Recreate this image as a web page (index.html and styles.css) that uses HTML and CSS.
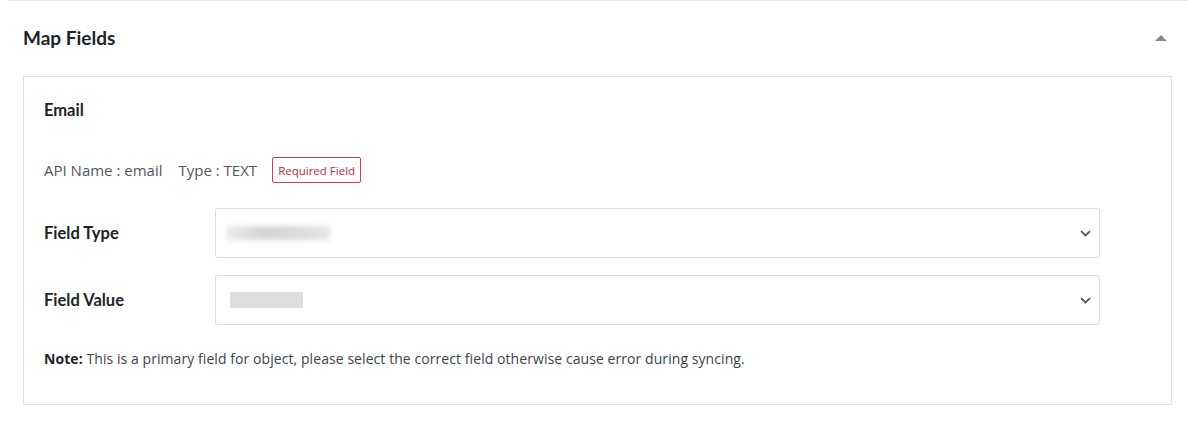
FILE: index.html
```html
<!DOCTYPE html>
<html lang="en">
<head>
<meta charset="utf-8">
<title>Map Fields</title>
<link rel="stylesheet" href="styles.css">
</head>
<body>
<section class="panel">
  <header class="panel-head">
    <h2 class="panel-title">Map Fields</h2>
    <span class="toggle" aria-hidden="true"></span>
  </header>
  <div class="field-box">
    <h3 class="field-name">Email</h3>
    <div class="meta">
      <span>API Name : email</span>
      <span class="type">Type : TEXT</span>
      <span class="badge">Required Field</span>
    </div>
    <div class="row row-type">
      <label class="row-label">Field Type</label>
      <div class="select">
        <span class="blur blur-a"></span>
        <svg class="chev" width="11" height="7" viewBox="0 0 11 7"><path d="M1 1.2l4.5 4.3 4.5-4.3" fill="none" stroke="#555" stroke-width="1.8"/></svg>
      </div>
    </div>
    <div class="row row-value">
      <label class="row-label">Field Value</label>
      <div class="select">
        <span class="blur blur-b"></span>
        <svg class="chev" width="11" height="7" viewBox="0 0 11 7"><path d="M1 1.2l4.5 4.3 4.5-4.3" fill="none" stroke="#555" stroke-width="1.8"/></svg>
      </div>
    </div>
    <p class="note"><strong>Note:</strong> This is a primary field for object, please select the correct field otherwise cause error during syncing.</p>
  </div>
</section>
</body>
</html>
```

FILE: styles.css
```css
html, body { background: #fff; }
body {
  margin: 0 8px;
  font-family: "Open Sans", "Noto Sans", sans-serif;
  color: #1d2327;
}
.panel {
  border-top: 1px solid #e6e6e6;
  padding: 0 15px 17px;
}
.panel-head {
  height: 75px;
  display: flex;
  align-items: center;
  justify-content: space-between;
}
.panel-title {
  margin: 0 0 2px;
  font-family: "Lato", "Open Sans", sans-serif;
  font-weight: 700;
  font-size: 19px;
  color: #1d2327;
}
.toggle {
  width: 0; height: 0;
  border-left: 6px solid transparent;
  border-right: 6px solid transparent;
  border-bottom: 6px solid #888;
  margin-right: 5px;
  margin-bottom: 2px;
}
.field-box {
  border: 1px solid #e2e2e2;
  padding: 23px 71px 36px 20px;
}
.field-name {
  margin: 0;
  font-family: "Lato", "Open Sans", sans-serif;
  font-weight: 700;
  font-size: 16.5px;
  line-height: 20px;
  color: #1d2327;
}
.meta {
  margin-top: 37px;
  height: 26px;
  display: flex;
  align-items: center;
  gap: 15px;
  font-size: 15px;
  color: #50575e;
}
.meta .type { margin-left: 1px; }
.badge {
  height: 26px;
  box-sizing: border-box;
  padding: 0 5px;
  display: flex;
  align-items: center;
  border: 1px solid #c9404e;
  border-radius: 2px;
  font-size: 11.5px;
  color: #b32d3a;
}
.row {
  display: flex;
  align-items: center;
}
.row-type { margin-top: 25px; }
.row-value { margin-top: 17px; }
.row-label {
  width: 171px;
  flex: none;
  font-family: "Lato", "Open Sans", sans-serif;
  font-weight: 700;
  font-size: 16.5px;
  color: #1d2327;
}
.select {
  flex: 1;
  height: 50px;
  box-sizing: border-box;
  border: 1px solid #dcdcdc;
  border-radius: 3px;
  display: flex;
  align-items: center;
  justify-content: space-between;
  padding: 0 8px 0 10px;
}
.blur {
  display: block;
  background: #d8d8d8;
  filter: blur(1.5px);
}
.blur-a {
  width: 104px;
  height: 14px;
  background: linear-gradient(90deg, #ececec, #d4d4d4 35%, #dadada 70%, #e6e6e6);
  filter: blur(2.5px);
}
.blur-b {
  width: 73px;
  height: 16px;
  margin-left: 4px;
  background: #dedede;
  filter: blur(0.6px);
}
.chev { display: block; }
.note {
  margin: 25px 0 0;
  font-family: "Open Sans", sans-serif;
  font-size: 14px;
  line-height: 18px;
  letter-spacing: 0.07px;
  color: #3c434a;
}
.note strong { color: #1d2327; }
```
